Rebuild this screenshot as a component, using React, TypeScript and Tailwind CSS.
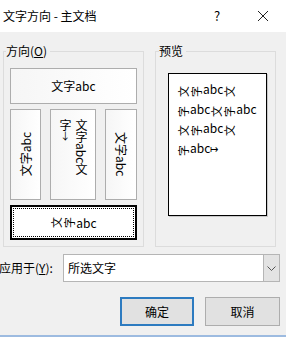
import type { ReactNode } from 'react'

const font = { fontFamily: '"Noto Sans CJK SC", "Liberation Sans", sans-serif' }

// a CJK character turned on its side, as Word draws it in the horizontal-rotated mode
function Side({ children }: { children: ReactNode }) {
  return (
    <span className="inline-flex h-[13px] w-[13px] -rotate-90 items-center justify-center align-[-2px] text-[11px] leading-[13px]">
      {children}
    </span>
  )
}

function DirButton({ className, children }: { className: string; children: ReactNode }) {
  return (
    <div
      className={`flex items-center justify-center border border-[#adadad] bg-gradient-to-r from-[#f6f6f6] to-white ${className}`}
    >
      {children}
    </div>
  )
}

export default function App() {
  return (
    <div
      className="flex h-[337px] w-[286px] flex-col overflow-hidden bg-[#f0f0f0] text-[12px] leading-[16px] text-black"
      style={font}
    >
      {/* title bar */}
      <div className="flex h-[32px] shrink-0 items-center bg-white pl-[3px]">
        <span>文字方向 - 主文档</span>
        <span className="ml-auto flex w-[46px] justify-center text-[13px]">?</span>
        <span className="flex w-[46px] justify-center">
          <svg width="10" height="10" viewBox="0 0 10 10" stroke="#222" strokeWidth="1">
            <line x1="0" y1="0" x2="10" y2="10" />
            <line x1="10" y1="0" x2="0" y2="10" />
          </svg>
        </span>
      </div>

      <div className="flex flex-1 flex-col border-b-2 border-[#9dbbe0]">
        <div className="mt-[11px] flex items-stretch gap-[11px] pl-[3px]">
          <fieldset className="w-[141px] min-w-0 border border-[#dcdcdc] px-[6px] pt-[9px] pb-[6px]">
            <legend className="-ml-[4px] pr-[3px]">
              方向(<span className="underline">O</span>)
            </legend>
            <div className="flex flex-col gap-[5px]">
              <DirButton className="h-[36px]">文字abc</DirButton>
              <div className="flex h-[91px] gap-[9px]">
                <DirButton className="w-[32px]">
                  <span className="rotate-180 [writing-mode:vertical-rl] [text-orientation:sideways]">文字abc</span>
                </DirButton>
                <DirButton className="w-[46px] items-start pt-[9px]">
                  <span className="h-[60px] [writing-mode:vertical-rl]">
                    文字abc文字<span className="text-[10px]">→</span>
                  </span>
                </DirButton>
                <DirButton className="w-[33px]">
                  <span className="[writing-mode:vertical-rl] [text-orientation:sideways]">文字abc</span>
                </DirButton>
              </div>
              <div className="h-[35px] border-2 border-black bg-white p-[1px]">
                <div className="flex h-full items-center justify-center border border-dotted border-black">
                  <Side>文</Side>
                  <Side>字</Side>abc
                </div>
              </div>
            </div>
          </fieldset>

          <fieldset className="w-[121px] min-w-0 border border-[#dcdcdc] pt-[14px] pl-[12px]">
            <legend className="-ml-[9px] pr-[3px]">预览</legend>
            <div className="h-[143px] w-[99px] border border-black bg-white px-[8px] pt-[5px] leading-[19.5px] shadow-[1px_1px_0_#c8c8c8]">
              <div>
                <Side>文</Side>
                <Side>字</Side>abc<Side>文</Side>
              </div>
              <div>
                <Side>字</Side>abc<Side>文</Side>
                <Side>字</Side>abc
              </div>
              <div>
                <Side>文</Side>
                <Side>字</Side>abc<Side>文</Side>
              </div>
              <div>
                <Side>字</Side>abc<span className="text-[10px]">↦</span>
              </div>
            </div>
          </fieldset>
        </div>

        {/* apply to */}
        <div className="mt-[7px] flex items-center gap-[3px]">
          <span className="-ml-[1px] w-[61px] whitespace-nowrap">
            应用于(<span className="underline">Y</span>):
          </span>
          <div className="flex h-[28px] w-[217px] border border-[#b5b5b5] bg-white">
            <span className="flex flex-1 items-center pl-[4px]">所选文字</span>
            <span className="flex w-[16px] items-center justify-center border-l border-[#b5b5b5] bg-[#e3e3e3]">
              <svg width="9" height="5" viewBox="0 0 9 5" fill="none" stroke="#555" strokeWidth="1">
                <polyline points="0.5,0.5 4.5,4.5 8.5,0.5" />
              </svg>
            </span>
          </div>
        </div>

        {/* buttons */}
        <div className="mt-[15px] flex justify-end gap-[11px] pr-[6px]">
          <button className="h-[29px] w-[74px] border-2 border-[#2d7bc0] bg-[#e1e1e1]">确定</button>
          <button className="h-[29px] w-[75px] border border-[#adadad] bg-[#e1e1e1]">取消</button>
        </div>
      </div>
    </div>
  )
}
